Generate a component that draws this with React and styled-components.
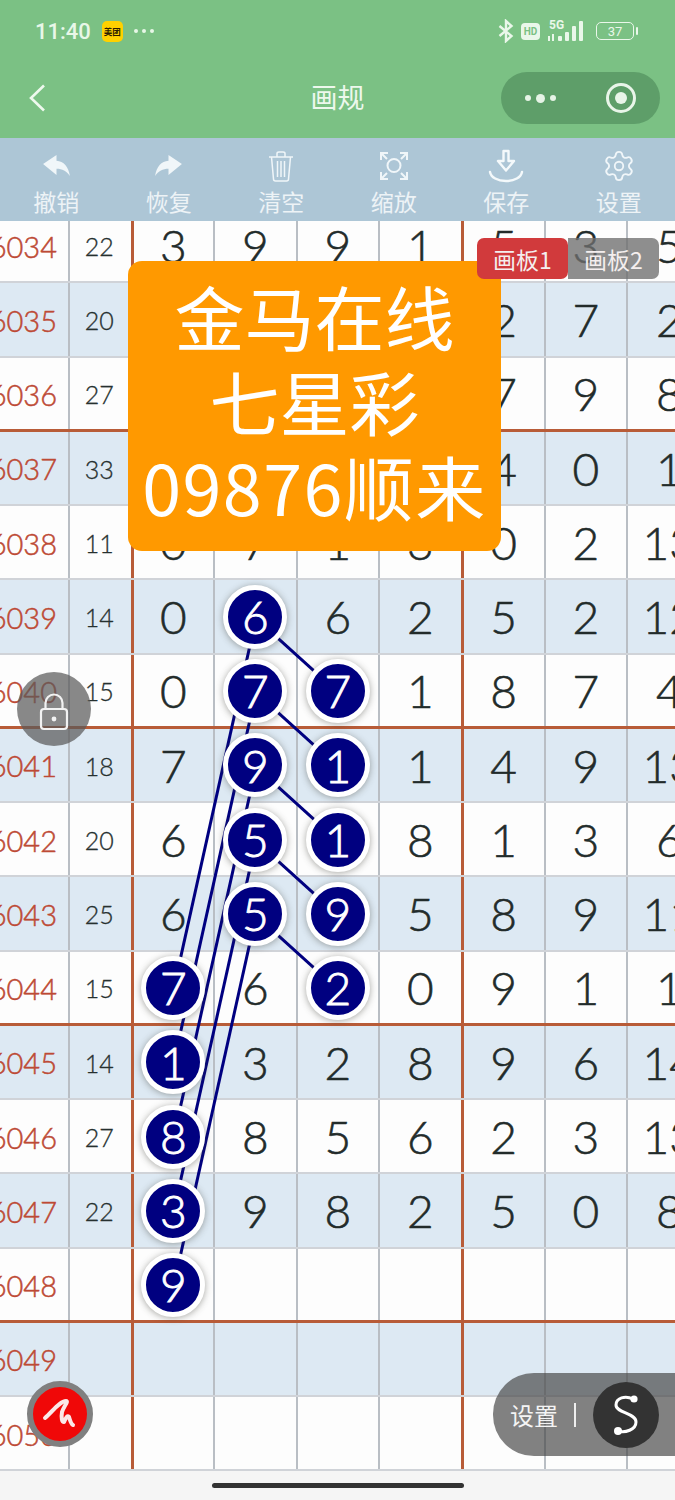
import React from "react";
import styled, { createGlobalStyle } from "styled-components";
import { Settings } from "lucide-react";

const GlobalStyle = createGlobalStyle`
  html, body { margin: 0; padding: 0; background: #fff; }
  * { box-sizing: border-box; }
`;

const ROW_H = 74.25;
const TOP_CUT = 12;
const COLUMN_CENTERS = [173.5, 256, 338, 420, 503, 586, 669];

// cells starting with * are the circled picks
const ROWS = [
  ["6034", "22", ["3", "9", "9", "1", "5", "3", "5"]],
  ["6035", "20", ["", "", "", "", "2", "7", "2"]],
  ["6036", "27", ["", "", "", "", "7", "9", "8"]],
  ["6037", "33", ["", "", "", "", "4", "0", "1"]],
  ["6038", "11", ["0", "7", "1", "3", "0", "2", "13"]],
  ["6039", "14", ["0", "*6", "6", "2", "5", "2", "12"]],
  ["6040", "15", ["0", "*7", "*7", "1", "8", "7", "4"]],
  ["6041", "18", ["7", "*9", "*1", "1", "4", "9", "13"]],
  ["6042", "20", ["6", "*5", "*1", "8", "1", "3", "6"]],
  ["6043", "25", ["6", "*5", "*9", "5", "8", "9", "11"]],
  ["6044", "15", ["*7", "6", "*2", "0", "9", "1", "1"]],
  ["6045", "14", ["*1", "3", "2", "8", "9", "6", "14"]],
  ["6046", "27", ["*8", "8", "5", "6", "2", "3", "13"]],
  ["6047", "22", ["*3", "9", "8", "2", "5", "0", "8"]],
  ["6048", "", ["*9", "", "", "", "", "", ""]],
  ["6049", "", ["", "", "", "", "", "", ""]],
  ["6050", "", ["", "", "", "", "", "", ""]],
];

// [fromRow, fromCol, toRow, toCol]
const LINKS = [
  [5, 1, 10, 0],
  [6, 1, 11, 0],
  [7, 1, 12, 0],
  [8, 1, 13, 0],
  [9, 1, 14, 0],
  [5, 1, 6, 2],
  [6, 1, 7, 2],
  [7, 1, 8, 2],
  [8, 1, 9, 2],
  [9, 1, 10, 2],
];

const rowCenter = (i) => ROW_H * (i + 0.5) - TOP_CUT + 1;

export default function App() {
  return (
    <Page>
      <GlobalStyle />
      <GreenTop>
        <StatusBar>
          <StatusLeft>
            <Clock>11:40</Clock>
            <AppBadge>美团</AppBadge>
            <StatusDots>
              <i />
              <i />
              <i />
            </StatusDots>
          </StatusLeft>
          <StatusRight>
            <svg width="16" height="24" viewBox="0 0 16 24" fill="none" stroke="#eaf7ea" strokeWidth="2.4">
              <path d="M1.500 7l12 10-5.500 5V2l5.500 5-12 10" />
            </svg>
            <HdBadge>HD</HdBadge>
            <SignalGroup>
              <FiveG>5G</FiveG>
              <svg width="40" height="24" viewBox="0 0 40 24" fill="#eaf7ea">
                <rect x="1" y="17" width="2" height="5" />
                <rect x="5" y="15" width="2" height="7" />
                <rect x="11" y="17" width="4" height="5" rx="1" />
                <rect x="18" y="13" width="4" height="9" rx="1" />
                <rect x="25" y="7" width="4" height="15" rx="1" />
                <rect x="32" y="2" width="4" height="20" rx="1" />
              </svg>
            </SignalGroup>
            <Battery>
              <BatteryBody>37</BatteryBody>
              <BatteryTip />
            </Battery>
          </StatusRight>
        </StatusBar>
        <NavBar>
          <BackButton>
            <svg width="18" height="28" viewBox="0 0 18 28" fill="none" stroke="#eef9ee" strokeWidth="2.6">
              <path d="M16 1.500L3 14l13 12.500" />
            </svg>
          </BackButton>
          <NavTitle>画规</NavTitle>
          <Capsule>
            <CapsuleDots>
              <Dot />
              <Dot $big />
              <Dot />
            </CapsuleDots>
            <RecordRing>
              <RecordCore />
            </RecordRing>
          </Capsule>
        </NavBar>
      </GreenTop>

      <Toolbar>
        <ToolItem>
          <IconSlot>
            <svg width="29" height="23" viewBox="0 0 30 24" fill="#f0f6f9">
              <path d="M1 10.500L15 1v6c7.500 .5 12.500 6 14 16-3.500-5-8-7.500-14-7.500v6.500z" />
            </svg>
          </IconSlot>
          <ToolLabel>撤销</ToolLabel>
        </ToolItem>
        <ToolItem>
          <IconSlot>
            <svg width="29" height="23" viewBox="0 0 30 24" fill="#f0f6f9">
              <path d="M29 10.500L15 1v6C7.500 7.500 2.500 13 1 23c3.500-5 8-7.500 14-7.500v6.500z" />
            </svg>
          </IconSlot>
          <ToolLabel>恢复</ToolLabel>
        </ToolItem>
        <ToolItem>
          <IconSlot>
            <svg width="26" height="32" viewBox="0 0 26 32" fill="none" stroke="#f0f6f9" strokeWidth="1.5">
              <path d="M1 7h24M9 7V3.500C9 2.500 10 2 11 2h4c1 0 2 .5 2 1.500V7M3.500 7l2 22c0 1 1 2 2 2h11c1 0 2-1 2-2l2-22M9.500 11v16M13 11v16M16.500 11v16" />
            </svg>
          </IconSlot>
          <ToolLabel>清空</ToolLabel>
        </ToolItem>
        <ToolItem>
          <IconSlot>
            <svg width="30" height="30" viewBox="0 0 30 30" fill="none" stroke="#f0f6f9" strokeWidth="2">
              <circle cx="15" cy="14.500" r="6.500" />
              <path d="M2 9V2h7M2 2l6 6M28 9V2h-7M28 2l-6 6M2 21v7h7M2 28l6-6M28 21v7h-7M28 28l-6-6" />
            </svg>
          </IconSlot>
          <ToolLabel>缩放</ToolLabel>
        </ToolItem>
        <ToolItem>
          <IconSlot>
            <svg width="36" height="34" viewBox="0 0 36 34" fill="none" stroke="#f4f9fb" strokeWidth="2.400" strokeLinejoin="round" strokeLinecap="round">
              <path d="M15.500 2h5v10h5.500L18 21.500 10 12h5.500zM2 23c1 5.500 7.500 9 16 9s15-3.500 16-9" />
            </svg>
          </IconSlot>
          <ToolLabel>保存</ToolLabel>
        </ToolItem>
        <ToolItem>
          <IconSlot>
            <Settings size={34} color="#f0f6f9" strokeWidth={1.3} />
          </IconSlot>
          <ToolLabel>设置</ToolLabel>
        </ToolItem>
      </Toolbar>

      <TableViewport>
        <TableInner>
          {ROWS.map(([seq, sum, cells], i) => (
            <Row key={seq} $alt={i % 2 === 1} $brown={i % 4 === 2}>
              <SeqCell>{seq}</SeqCell>
              <SumCell>{sum}</SumCell>
              {cells.map((value, c) => (
                <NumCell key={c} $thick={c === 3} $last={c === 6}>
                  {value.startsWith("*") ? <Ball>{value.slice(1)}</Ball> : value}
                </NumCell>
              ))}
            </Row>
          ))}
        </TableInner>
        <LinkLayer width="675" height="1250">
          {LINKS.map(([r1, c1, r2, c2], i) => (
            <line
              key={i}
              x1={COLUMN_CENTERS[c1]}
              y1={rowCenter(r1)}
              x2={COLUMN_CENTERS[c2]}
              y2={rowCenter(r2)}
              stroke="#000080"
              strokeWidth="3"
            />
          ))}
        </LinkLayer>
      </TableViewport>

      <BottomBar>
        <HomeIndicator />
      </BottomBar>

      <PromoCard>
        <div>金马在线</div>
        <div>七星彩</div>
        <PromoWide>09876顺来</PromoWide>
      </PromoCard>

      <BoardTabs>
        <BoardTab $active>画板1</BoardTab>
        <BoardTab>画板2</BoardTab>
      </BoardTabs>

      <LockButton>
        <svg width="30" height="38" viewBox="0 0 30 38" fill="none" stroke="#f2f2f2" strokeWidth="2.2">
          <path d="M6.500 16V10a8.500 8.500 0 0 1 17 0v6" />
          <rect x="2" y="16" width="26" height="20" rx="3" />
          <circle cx="15" cy="26" r="2.400" fill="#f2f2f2" stroke="none" />
        </svg>
      </LockButton>

      <BrushButton>
        <svg width="36" height="32" viewBox="0 0 36 32" fill="none" stroke="#fbe9e9" strokeWidth="4" strokeLinecap="round" strokeLinejoin="round">
          <path d="M3 20C10 14 18 3 24 3c3 0-2 5-4 11-1 6 0 10 2 10 2-4 3-7 5-5 1 3 2 7 4 8" />
        </svg>
      </BrushButton>

      <SidePanel>
        <SideLabel>设置</SideLabel>
        <SideDivider />
        <SideCircle>
          <svg width="30" height="44" viewBox="0 0 30 44" fill="none" stroke="#fff" strokeWidth="3" strokeLinecap="round">
            <path d="M22 6C14 2 5 5 5 12c0 8 20 8 20 17 0 8-11 11-18 9" />
            <circle cx="23" cy="6" r="3.600" fill="#fff" stroke="none" />
            <circle cx="7" cy="38" r="4" fill="#fff" stroke="none" />
          </svg>
        </SideCircle>
      </SidePanel>
    </Page>
  );
}

const Page = styled.div`
  position: relative;
  display: flex;
  flex-direction: column;
  width: 675px;
  height: 1500px;
  overflow: hidden;
  font-family: "Lato", "Noto Sans CJK SC", sans-serif;
  background: #f6f6f6;
`;

const GreenTop = styled.header`
  height: 138px;
  background: #7bc184;
  display: flex;
  flex-direction: column;
`;

const StatusBar = styled.div`
  height: 62px;
  display: flex;
  align-items: center;
  justify-content: space-between;
  padding: 0 37px 0 35px;
`;

const StatusLeft = styled.div`
  display: flex;
  align-items: center;
  gap: 11px;
`;

const Clock = styled.span`
  font-family: "Roboto", sans-serif;
  font-size: 22px;
  font-weight: 500;
  color: #e8f7e8;
`;

const AppBadge = styled.span`
  width: 21px;
  height: 21px;
  border-radius: 5px;
  background: #ffd100;
  color: #2a1c00;
  font-size: 8.5px;
  font-weight: 700;
  font-family: "Noto Sans CJK SC", sans-serif;
  display: flex;
  align-items: center;
  justify-content: center;
  white-space: nowrap;
`;

const StatusDots = styled.span`
  display: flex;
  gap: 4px;
  i {
    width: 4px;
    height: 4px;
    border-radius: 50%;
    background: #e8f7e8;
  }
`;

const StatusRight = styled.div`
  display: flex;
  align-items: center;
  gap: 7px;
`;

const HdBadge = styled.span`
  width: 19px;
  height: 17px;
  border-radius: 4px;
  background: #eaf7ea;
  color: #7bc184;
  font-family: "Roboto", sans-serif;
  font-size: 10px;
  font-weight: 700;
  display: flex;
  align-items: center;
  justify-content: center;
`;

const SignalGroup = styled.div`
  position: relative;
  width: 40px;
  height: 24px;
`;

const FiveG = styled.span`
  position: absolute;
  left: 2px;
  top: -1px;
  font-family: "Roboto", sans-serif;
  font-size: 12px;
  line-height: 14px;
  font-weight: 700;
  color: #eaf7ea;
`;

const Battery = styled.div`
  display: flex;
  align-items: center;
  gap: 2px;
  margin-left: 2px;
`;

const BatteryBody = styled.span`
  width: 38px;
  height: 18px;
  border: 1.500px solid #eaf7ea;
  border-radius: 5px;
  color: #eaf7ea;
  font-family: "Roboto", sans-serif;
  font-size: 13px;
  display: flex;
  align-items: center;
  justify-content: center;
`;

const BatteryTip = styled.span`
  width: 2px;
  height: 8px;
  border-radius: 1px;
  background: #eaf7ea;
`;

const NavBar = styled.div`
  position: relative;
  height: 76px;
  display: flex;
  align-items: center;
  justify-content: space-between;
  padding: 0 15px 4px 28px;
`;

const BackButton = styled.div`
  display: flex;
`;

const NavTitle = styled.div`
  position: absolute;
  left: 0;
  right: 0;
  top: 17px;
  text-align: center;
  font-size: 27px;
  line-height: 36px;
  color: #edf8ed;
  font-family: "Noto Sans CJK SC", sans-serif;
`;

const Capsule = styled.div`
  width: 159px;
  height: 52px;
  border-radius: 26px;
  background: #5e9e69;
  display: flex;
  align-items: center;
  justify-content: space-between;
  padding: 0 24px;
`;

const CapsuleDots = styled.div`
  display: flex;
  align-items: center;
  gap: 5px;
`;

const Dot = styled.span`
  width: ${(p) => (p.$big ? 9 : 6)}px;
  height: ${(p) => (p.$big ? 9 : 6)}px;
  border-radius: 50%;
  background: #e6f3e6;
`;

const RecordRing = styled.div`
  width: 30px;
  height: 30px;
  border: 3px solid #e9f5e9;
  border-radius: 50%;
  display: flex;
  align-items: center;
  justify-content: center;
`;

const RecordCore = styled.span`
  width: 12px;
  height: 12px;
  border-radius: 50%;
  background: #e9f5e9;
`;

const Toolbar = styled.nav`
  height: 83px;
  background: #adc6d6;
  display: grid;
  grid-template-columns: repeat(6, 1fr);
`;

const ToolItem = styled.div`
  display: flex;
  flex-direction: column;
  align-items: center;
`;

const IconSlot = styled.div`
  height: 47px;
  display: flex;
  align-items: center;
  justify-content: center;
  padding-top: 8px;
`;

const ToolLabel = styled.span`
  font-family: "Noto Sans CJK SC", sans-serif;
  font-size: 23px;
  line-height: 32px;
  color: #edf3f6;
`;

const TableViewport = styled.main`
  position: relative;
  height: 1250px;
  overflow: hidden;
`;

const TableInner = styled.div`
  margin-top: -${TOP_CUT}px;
`;

const Row = styled.div`
  display: grid;
  grid-template-columns: 70px 63.5px 81.5px 82.5px 82.5px 83.5px 82px 82.5px 82.5px;
  height: ${ROW_H}px;
  background: ${(p) => (p.$alt ? "#dde9f3" : "#fdfdfd")};
  border-bottom: ${(p) => (p.$brown ? "3px solid #b85c38" : "2px solid #d0d3d8")};
`;

const SeqCell = styled.div`
  display: flex;
  align-items: center;
  justify-content: flex-end;
  padding: 2px 11px 0 0;
  overflow: hidden;
  border-right: 2px solid #b9bec4;
  font-size: 29px;
  font-weight: 300;
  -webkit-text-stroke: 0.5px #bd4a35;
  color: #bd4a35;
  white-space: nowrap;
`;

const SumCell = styled.div`
  display: flex;
  align-items: center;
  justify-content: center;
  padding: 2px 2px 0 0;
  border-right: 3px solid #b85c38;
  font-size: 25px;
  font-weight: 300;
  -webkit-text-stroke: 0.3px #26302f;
  color: #26302f;
`;

const NumCell = styled.div`
  display: flex;
  align-items: center;
  justify-content: center;
  padding-top: 1px;
  border-right: ${(p) => (p.$thick ? "3px solid #b85c38" : p.$last ? "0" : "2px solid #b9bec4")};
  font-size: 46px;
  font-weight: 300;
  -webkit-text-stroke: 0.6px #222b2a;
  color: #222b2a;
  white-space: nowrap;
`;

const Ball = styled.span`
  position: relative;
  z-index: 2;
  flex: none;
  width: 64px;
  height: 64px;
  border-radius: 50%;
  background: #000080;
  border: 5px solid #fff;
  box-shadow: 0 1px 7px rgba(60, 60, 50, 0.45);
  color: #fff;
  -webkit-text-stroke: 0.9px #fff;
  display: flex;
  align-items: center;
  justify-content: center;
  font-size: 46px;
  font-weight: 300;
`;

const LinkLayer = styled.svg`
  position: absolute;
  left: 0;
  top: 0;
  z-index: 1;
`;

const BottomBar = styled.footer`
  flex: 1;
  background: #f5f5f5;
  display: flex;
  justify-content: center;
  padding-top: 12px;
`;

const HomeIndicator = styled.div`
  width: 252px;
  height: 5px;
  border-radius: 3px;
  background: #333;
`;

const PromoCard = styled.div`
  position: absolute;
  z-index: 3;
  left: 128px;
  top: 261px;
  width: 373px;
  height: 290px;
  border-radius: 14px;
  background: #ff9900;
  color: #fff;
  font-family: "Noto Sans CJK SC", sans-serif;
  font-size: 70px;
  line-height: 85px;
  text-align: center;
  padding-top: 12px;
  white-space: nowrap;
`;

const PromoWide = styled.div`
  letter-spacing: 1.500px;
`;

const BoardTabs = styled.div`
  position: absolute;
  z-index: 4;
  left: 477px;
  top: 238px;
  display: flex;
`;

const BoardTab = styled.div`
  width: 91px;
  height: 41px;
  border-radius: ${(p) => (p.$active ? "7px" : "0 7px 7px 0")};
  background: ${(p) => (p.$active ? "#d13a3c" : "rgba(110, 110, 110, 0.78)")};
  color: #f4eeee;
  font-family: "Noto Sans CJK SC", sans-serif;
  font-size: 23px;
  display: flex;
  align-items: center;
  justify-content: center;
`;

const LockButton = styled.div`
  position: absolute;
  z-index: 4;
  left: 17px;
  top: 672px;
  width: 74px;
  height: 74px;
  border-radius: 50%;
  background: rgba(90, 90, 90, 0.72);
  display: flex;
  align-items: center;
  justify-content: center;
  padding-top: 6px;
`;

const BrushButton = styled.div`
  position: absolute;
  z-index: 4;
  left: 27px;
  top: 1381px;
  width: 66px;
  height: 66px;
  border-radius: 50%;
  background: #f00808;
  border: 6px solid #808080;
  display: flex;
  align-items: center;
  justify-content: center;
`;

const SidePanel = styled.div`
  position: absolute;
  z-index: 4;
  left: 493px;
  top: 1373px;
  width: 182px;
  height: 83px;
  border-radius: 41px 0 0 41px;
  background: rgba(70, 70, 70, 0.68);
  display: flex;
  align-items: center;
  padding-left: 17px;
`;

const SideLabel = styled.span`
  font-family: "Noto Sans CJK SC", sans-serif;
  font-size: 24px;
  color: #f4f4f4;
`;

const SideDivider = styled.span`
  width: 2px;
  height: 24px;
  margin-left: 16px;
  background: #eee;
`;

const SideCircle = styled.div`
  width: 66px;
  height: 66px;
  margin-left: 17px;
  border-radius: 50%;
  background: #333;
  display: flex;
  align-items: center;
  justify-content: center;
`;
